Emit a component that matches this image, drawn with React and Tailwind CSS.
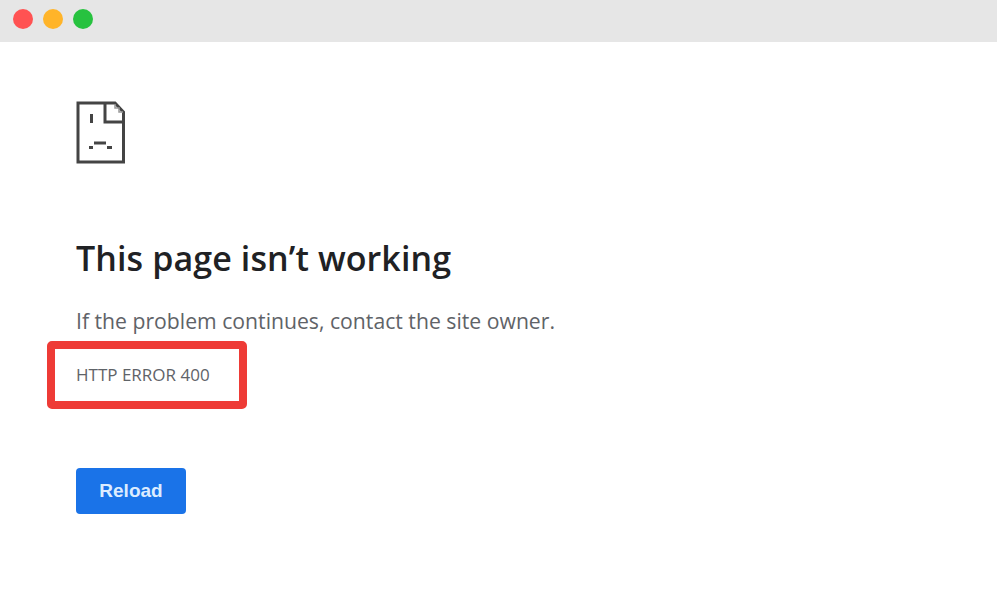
function SadPage() {
  return (
    <svg width="50" height="63" viewBox="0 0 50 63" fill="none" stroke="#444" strokeWidth="3" className="block">
      <path d="M2 61V2H39L47.5 11V61ZM29 2V21H48" />
      <path d="M39 3V7H43V11H47" stroke="#999" strokeWidth="1.5" />
      <path d="M15.5 13V22" />
      <path d="M13 46.5H17M18 42H30M31 46.5H36" />
    </svg>
  )
}

export default function App() {
  return (
    <div className="w-[997px] h-[613px] overflow-hidden bg-white font-['Open_Sans','Noto_Sans',sans-serif]">
      <div className="h-[42px] bg-[#e6e6e6] flex items-center gap-[10px] pl-[13px] pb-[5px]">
        <span className="w-5 h-5 rounded-full bg-[#ff5252]" />
        <span className="w-5 h-5 rounded-full bg-[#ffb429]" />
        <span className="w-5 h-5 rounded-full bg-[#27c23f]" />
      </div>

      <div className="pl-[76px] pt-[59px]">
        <SadPage />
        <h1 className="mt-[69px] text-[34px] leading-[50px] font-semibold text-[#202124] tracking-[0.1px]">
          This page isn’t working
        </h1>
        <p className="mt-[24px] text-[21.2px] leading-[28px] text-[#5f6368]">
          If the problem continues, contact the site owner.
        </p>
        <div className="-ml-[29px] mt-[6px] w-[200px] h-[68px] border-8 border-[#ee3b36] rounded-[5px] flex items-center pl-[21px]">
          <span className="text-[17px] leading-5 text-[#5f6368]">HTTP ERROR 400</span>
        </div>
        <button className="mt-[59px] w-[110px] h-[46px] rounded-[4px] bg-[#1a73e8] text-[#dcecff] text-[19px] font-semibold font-['Liberation_Sans',sans-serif] flex items-center justify-center">
          Reload
        </button>
      </div>
    </div>
  )
}
